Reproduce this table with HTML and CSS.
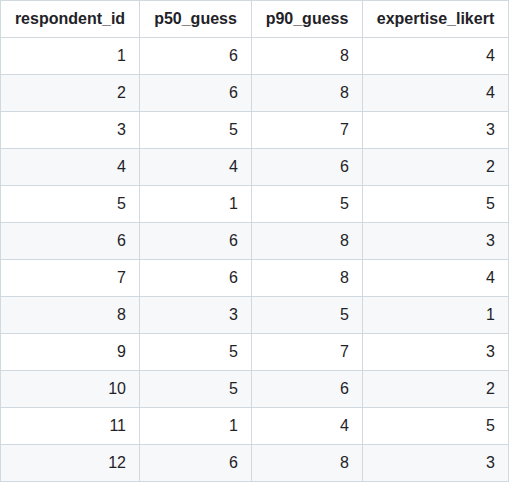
FILE: index.html
```html
<!DOCTYPE html>
<html>
<head>
<meta charset="utf-8">
<link rel="stylesheet" href="styles.css">
</head>
<body>
<table class="data">
<colgroup>
<col class="c1"><col class="c2"><col class="c3"><col class="c4">
</colgroup>
<thead>
<tr><th>respondent_id</th><th>p50_guess</th><th>p90_guess</th><th>expertise_likert</th></tr>
</thead>
<tbody>
<tr><td>1</td><td>6</td><td>8</td><td>4</td></tr>
<tr><td>2</td><td>6</td><td>8</td><td>4</td></tr>
<tr><td>3</td><td>5</td><td>7</td><td>3</td></tr>
<tr><td>4</td><td>4</td><td>6</td><td>2</td></tr>
<tr><td>5</td><td>1</td><td>5</td><td>5</td></tr>
<tr><td>6</td><td>6</td><td>8</td><td>3</td></tr>
<tr><td>7</td><td>6</td><td>8</td><td>4</td></tr>
<tr><td>8</td><td>3</td><td>5</td><td>1</td></tr>
<tr><td>9</td><td>5</td><td>7</td><td>3</td></tr>
<tr><td>10</td><td>5</td><td>6</td><td>2</td></tr>
<tr><td>11</td><td>1</td><td>4</td><td>5</td></tr>
<tr><td>12</td><td>6</td><td>8</td><td>3</td></tr>
</tbody>
</table>
</body>
</html>
```
FILE: styles.css
```css
html, body {
  margin: 0;
  padding: 0;
  background: #ffffff;
}
.data {
  border-collapse: collapse;
  border-spacing: 0;
  table-layout: fixed;
  width: 508px;
  font-family: "Liberation Sans", Arial, sans-serif;
  font-size: 16px;
  line-height: 24px;
  color: #1f2328;
}
.c1 { width: 139px; }
.c2 { width: 112px; }
.c3 { width: 111px; }
.c4 { width: 146px; }
.data th, .data td {
  border: 1px solid #d1d9e0;
  padding: 6px 13px;
  white-space: nowrap;
}
.data th {
  font-weight: 600;
  text-align: center;
}
.data td {
  text-align: right;
}
.data tbody tr:nth-child(odd) {
  background: #ffffff;
}
.data tbody tr:nth-child(even) {
  background: #f6f8fa;
}
```
